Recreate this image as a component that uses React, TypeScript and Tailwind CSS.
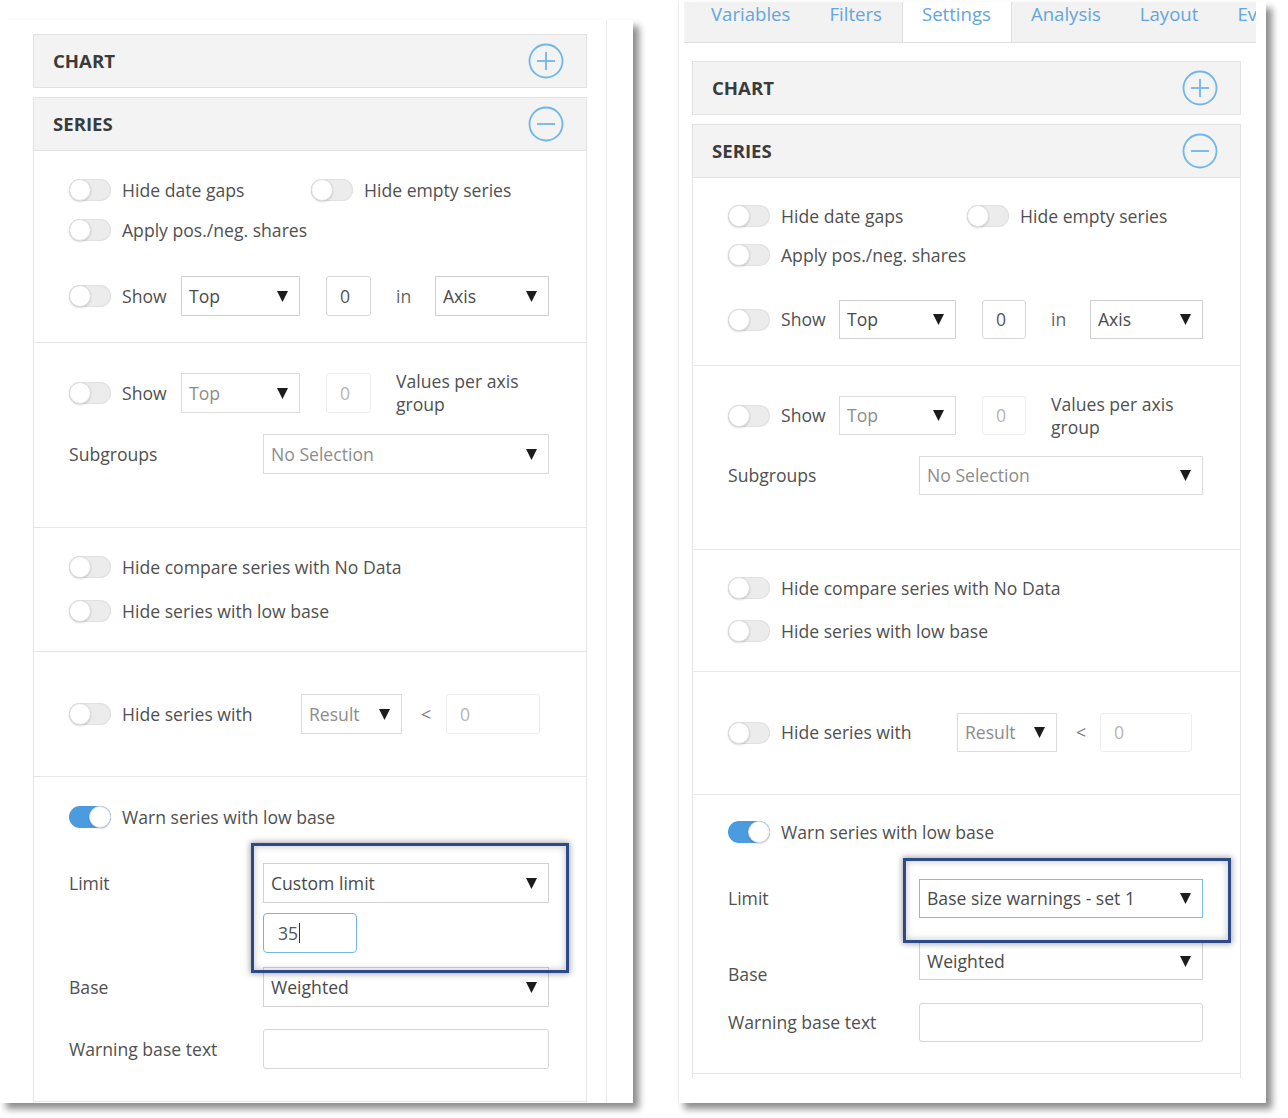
import React from 'react'

type Variant = 'left' | 'right'

// per-panel spacing: the second capture is a few px tighter than the first
const SPACING = {
  left: {
    s1: 'pt-[27px] pb-[26px]',
    row2: 'mt-[16px]',
    row3: 'mt-[34px] h-[40px]',
    first: 'w-[242px]',
    show: 'w-[59px]',
    top: 'w-[119px]',
    num: 'w-[45px]',
    s2: 'pt-[30px] pb-[53px]',
    sub: 'mt-[21px] grid-cols-[194px_1fr]',
    s3: 'pt-[27px] pb-[28px]',
    s3row: 'mt-[20px]',
    s4: 'pt-[42px] pb-[42px]',
    hideLbl: 'w-[179px]',
    result: 'w-[101px]',
    lt: 'w-[44px]',
    num2: 'w-[94px]',
    s5: 'pt-[28px] pb-[32px]',
    grid: 'grid-cols-[194px_1fr]',
    h: 'h-[40px]',
  },
  right: {
    s1: 'pt-[26px] pb-[26px]',
    row2: 'mt-[15px]',
    row3: 'mt-[33px] h-[39px]',
    first: 'w-[239px]',
    show: 'w-[58px]',
    top: 'w-[117px]',
    num: 'w-[44px]',
    s2: 'pt-[30px] pb-[54px]',
    sub: 'mt-[21px] grid-cols-[191px_1fr]',
    s3: 'pt-[26px] pb-[28px]',
    s3row: 'mt-[19px]',
    s4: 'pt-[41px] pb-[42px]',
    hideLbl: 'w-[176px]',
    result: 'w-[100px]',
    lt: 'w-[43px]',
    num2: 'w-[92px]',
    s5: 'pt-[25px] pb-[31px]',
    grid: 'grid-cols-[191px_1fr]',
    h: 'h-[39px]',
  },
}

function Toggle({ on = false }: { on?: boolean }) {
  return (
    <span
      className={`relative inline-block h-[22px] w-[42px] shrink-0 rounded-full ${
        on ? 'bg-[#4a9be0]' : 'bg-[#ececec] shadow-[inset_0_0_0_1px_#e0e0e0]'
      }`}
    >
      <span
        className={`absolute top-0 h-[22px] w-[22px] rounded-full border border-[#dcdcdc] bg-white shadow-[0_1px_2px_rgba(0,0,0,0.15)] ${
          on ? 'right-0' : 'left-0'
        }`}
      />
    </span>
  )
}

function Caret() {
  return (
    <svg width="11" height="13" viewBox="0 0 11 13" className="shrink-0">
      <path d="M0 1h11L5.5 12z" fill="#1c1c1c" />
    </svg>
  )
}

function Select({
  value,
  className = '',
  muted = false,
  focus = false,
}: {
  value: string
  className?: string
  muted?: boolean
  focus?: boolean
}) {
  return (
    <div
      className={`flex items-center justify-between border bg-white pl-[7px] pr-[11px] ${
        focus ? 'border-[#7dbcec]' : muted ? 'border-[#dcdcdc]' : 'border-[#d2d2d2]'
      } ${className}`}
    >
      <span className={muted ? 'text-[#8c8c8c]' : 'text-[#4a4a4a]'}>{value}</span>
      <Caret />
    </div>
  )
}

function Input({
  value = '',
  className = '',
  muted = false,
  focus = false,
}: {
  value?: string
  className?: string
  muted?: boolean
  focus?: boolean
}) {
  return (
    <div
      className={`flex items-center rounded-[3px] border bg-white pl-[13px] ${
        focus ? 'border-[#74b6ea]' : muted ? 'border-[#ededed]' : 'border-[#d6d6d6]'
      } ${className}`}
    >
      <span className={muted ? 'text-[#b5b5b5]' : 'text-[#555]'}>{value}</span>
      {focus && <span className="ml-[1px] h-[20px] w-px bg-[#333]" />}
    </div>
  )
}

function CircleIcon({ minus = false }: { minus?: boolean }) {
  return (
    <svg width="36" height="36" viewBox="0 0 36 36">
      <circle cx="18" cy="18" r="16.5" fill="none" stroke="#70b6e8" strokeWidth="1.8" />
      <path d="M9 18h18" stroke="#70b6e8" strokeWidth="1.8" />
      {!minus && <path d="M18 9v18" stroke="#70b6e8" strokeWidth="1.8" />}
    </svg>
  )
}

function Header({ title, open = false }: { title: string; open?: boolean }) {
  return (
    <div className="flex h-[54px] items-center justify-between border border-[#e2e2e2] bg-[#f3f3f3] pl-[19px] pr-[22px]">
      <span className="text-[18.6px] font-bold text-[#3b3b3b]">{title}</span>
      <CircleIcon minus={open} />
    </div>
  )
}

function ToggleRow({ label, on = false, className = '' }: { label: string; on?: boolean; className?: string }) {
  return (
    <div className={`flex h-[24px] items-center gap-[11px] ${className}`}>
      <Toggle on={on} />
      <span className="whitespace-nowrap">{label}</span>
    </div>
  )
}

function SeriesBody({ variant }: { variant: Variant }) {
  const s = SPACING[variant]
  const right = variant === 'right'
  return (
    <div className="border-x border-[#e6e6e6]">
      {/* basic toggles */}
      <div className={`border-b border-[#e6e6e6] pl-[35px] pr-[37px] ${s.s1}`}>
        <div className="flex h-[24px] items-center">
          <ToggleRow label="Hide date gaps" className={s.first} />
          <ToggleRow label="Hide empty series" />
        </div>
        <ToggleRow label="Apply pos./neg. shares" className={s.row2} />
        <div className={`flex items-center ${s.row3}`}>
          <Toggle />
          <span className={`ml-[11px] ${s.show}`}>Show</span>
          <Select value="Top" className={`h-full ${s.top}`} />
          <Input value="0" className={`ml-[26px] h-full ${s.num}`} />
          <span className="ml-[25px] w-[39px] text-[#666]">in</span>
          <Select value="Axis" className="h-full flex-1" />
        </div>
      </div>

      {/* values per axis group */}
      <div className={`border-b border-[#e6e6e6] pl-[35px] pr-[37px] ${s.s2}`}>
        <div className={`flex items-center ${s.h}`}>
          <Toggle />
          <span className={`ml-[11px] ${s.show}`}>Show</span>
          <Select value="Top" muted className={`h-full ${s.top}`} />
          <Input value="0" muted className={`ml-[26px] h-full ${s.num}`} />
          <span className="ml-[25px] w-[140px] leading-[23px]">Values per axis group</span>
        </div>
        <div className={`grid items-center ${s.sub}`}>
          <span>Subgroups</span>
          <Select value="No Selection" muted className={s.h} />
        </div>
      </div>

      {/* hide toggles */}
      <div className={`border-b border-[#e6e6e6] pl-[35px] ${s.s3}`}>
        <ToggleRow label="Hide compare series with No Data" />
        <ToggleRow label="Hide series with low base" className={s.s3row} />
      </div>

      {/* hide series with */}
      <div className={`border-b border-[#e6e6e6] pl-[35px] ${s.s4}`}>
        <div className={`flex items-center ${s.h}`}>
          <Toggle />
          <span className={`ml-[11px] ${s.hideLbl}`}>Hide series with</span>
          <Select value="Result" muted className={`h-full ${s.result}`} />
          <span className={`pl-[19px] text-[#777] ${s.lt}`}>&lt;</span>
          <Input value="0" muted className={`h-full ${s.num2}`} />
        </div>
      </div>

      {/* warn series */}
      <div className={`border-b border-[#e6e6e6] pl-[35px] pr-[37px] ${s.s5}`}>
        <ToggleRow label="Warn series with low base" on />
        {right ? (
          <>
            <div className={`mt-[35px] grid items-center ${s.grid}`}>
              <span>Limit</span>
              <div className="relative">
                <Select value="Base size warnings - set 1" focus className="h-[39px]" />
                <div className="absolute left-[-16px] top-[-21px] z-10 h-[85px] w-[328px] border-[3px] border-[#2c4a8a] shadow-[0_0_6px_1px_rgba(0,0,0,0.35),inset_0_0_6px_1px_rgba(0,0,0,0.2)]" />
              </div>
            </div>
            <div className={`mt-[24px] grid items-end ${s.grid}`}>
              <span className="translate-y-[7px]">Base</span>
              <Select value="Weighted" className="h-[38px]" />
            </div>
            <div className={`mt-[23px] grid items-center ${s.grid}`}>
              <span>Warning base text</span>
              <Input className="h-[39px]" />
            </div>
          </>
        ) : (
          <>
            <div className={`mt-[34px] grid items-start ${s.grid}`}>
              <span className="leading-[40px]">Limit</span>
              <div className="relative">
                <Select value="Custom limit" className="h-[40px]" />
                <Input value="35" focus className="mt-[10px] h-[40px] w-[94px] rounded-[4px] pl-[14px]" />
                <div className="absolute left-[-12px] top-[-20px] z-10 h-[130px] w-[318px] border-[3px] border-[#2c4a8a] shadow-[0_0_6px_1px_rgba(0,0,0,0.35),inset_0_0_6px_1px_rgba(0,0,0,0.2)]" />
              </div>
            </div>
            <div className={`mt-[14px] grid items-center ${s.grid}`}>
              <span>Base</span>
              <Select value="Weighted" className="h-[40px]" />
            </div>
            <div className={`mt-[22px] grid items-center ${s.grid}`}>
              <span>Warning base text</span>
              <Input className="h-[40px]" />
            </div>
          </>
        )}
      </div>
    </div>
  )
}

const TABS = ['Variables', 'Filters', 'Settings', 'Analysis', 'Layout', 'Events']

function Tabs() {
  return (
    <div className="ml-[5px] flex h-[41px] w-[572px] overflow-hidden border-b border-[#dedede] bg-[#f2f2f2] text-[18.6px] leading-[24px] text-[#64a5dc]">
      {TABS.map((t, i) => (
        <div
          key={t}
          className={`shrink-0 whitespace-nowrap pr-[20px] ${i === 0 ? 'pl-[27px]' : 'pl-[19px]'} ${
            t === 'Settings' ? '-mb-px border-x border-[#dedede] bg-white' : ''
          }`}
        >
          {t}
        </div>
      ))}
    </div>
  )
}

export default function App() {
  return (
    <div className="h-[1118px] w-[1288px] overflow-hidden bg-white font-['Open_Sans',sans-serif] text-[17.6px] text-[#505050]">
      <div className="flex items-start">
        {/* first capture */}
        <div className="mt-[20px] h-[1083px] w-[633px] overflow-hidden bg-white shadow-[6px_6px_7px_rgba(0,0,0,0.45)]">
          <div className="h-full w-[607px] border-r border-[#e8e8e8] pl-[33px] pr-[19px] pt-[14px]">
            <Header title="CHART" />
            <div className="mt-[9px]">
              <Header title="SERIES" open />
            </div>
            <SeriesBody variant="left" />
            <div className="h-[10px] border-x border-[#e6e6e6]" />
          </div>
        </div>

        {/* second capture */}
        <div className="ml-[45px] mt-[2px] h-[1101px] w-[588px] overflow-hidden border-l border-[#ebebeb] bg-white shadow-[6px_6px_7px_rgba(0,0,0,0.45)]">
          <Tabs />
          <div className="w-[562px] pl-[13px] pt-[18px]">
            <Header title="CHART" />
            <div className="mt-[9px]">
              <Header title="SERIES" open />
            </div>
            <SeriesBody variant="right" />
            <div className="h-[4px] border-x border-[#e6e6e6]" />
          </div>
        </div>
      </div>
    </div>
  )
}
